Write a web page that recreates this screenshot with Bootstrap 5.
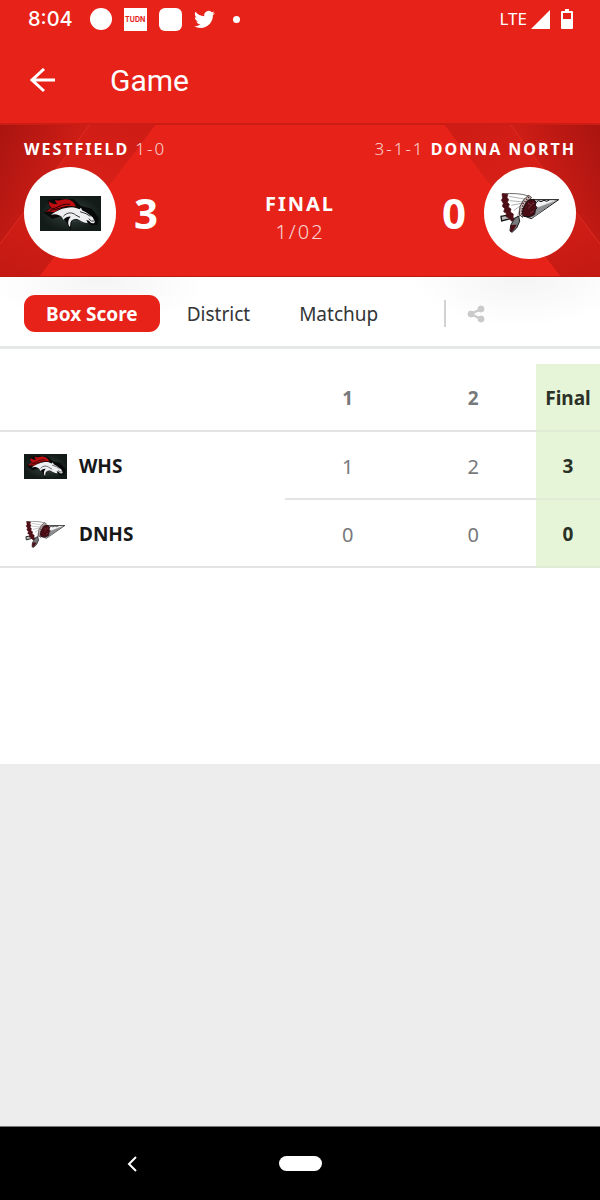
<!DOCTYPE html>
<html lang="en">
<head>
<meta charset="utf-8">
<meta name="viewport" content="width=device-width, initial-scale=1">
<title>Game</title>
<link rel="stylesheet" href="https://cdn.jsdelivr.net/npm/bootstrap@5.3.0/dist/css/bootstrap.min.css">
<style>
  :root { --brand: #e62219; --rule: #e3e5e5; }
  body { font-family: "Noto Sans", sans-serif; background: #ededed; color: #2d2f31; }
  .brand-bg { background: var(--brand); color: #fff; }
  .status { height: 38px; padding: 0 27px 0 28px; line-height: 24px; }
  .clock { font: 500 20px/24px "Inter", sans-serif; margin-right: 9px; }
  .net { font-size: 17px; font-weight: 400; }
  .tile { width: 23px; height: 23px; background: #fff; }
  .round-tile { width: 22px; height: 22px; }
  .tudn { color: var(--brand); font: 700 7px/23px "Inter", sans-serif; text-align: center; }
  .dot { width: 7px; height: 7px; background: #fff; border-radius: 50%; margin-left: 10px; }
  .app-bar { height: 85px; padding: 0 28px; }
  .app-title { font: 400 30px/40px Roboto, sans-serif; margin: 0 0 0 52px; }
  .scoreboard { height: 154px; border-top: 2px solid #cb1d14; border-bottom: 1px solid #b91a12; overflow: hidden; }
  .shard { width: 160px; height: 154px; top: -2px; }
  .shard-left { left: 0; }
  .shard-right { right: 0; transform: scaleX(-1); }
  .score-body { padding: 12px 24px 0; }
  .team-line { font-size: 16px; line-height: 24px; letter-spacing: 2px; margin-bottom: 6px; }
  .team-line .soft { font-size: 17px; }
  .soft { font-weight: 300; opacity: .8; }
  .crest { width: 92px; height: 92px; border-radius: 50%; background: #fff; }
  .side { gap: 18px; }
  .points { font-size: 42px; line-height: 48px; font-weight: 700; }
  .state { font-size: 20px; line-height: 28px; letter-spacing: 2px; padding-top: 10px; }
  .tabs { padding: 18px 24px 14px; border-bottom: 3px solid #e6e7e7;
    background: radial-gradient(110px 50px at 100px 0, #f4f4f4, transparent), radial-gradient(110px 50px at calc(100% - 80px) 0, #f4f4f4, transparent), #fff; }
  .tab-btn { font-size: 19px; line-height: 27px; padding: 6px 22px 4px; border: 0; border-radius: 11px; color: #333537; background: none; margin-right: 5px; }
  .tab-btn.on { background: var(--brand); color: #fff; font-weight: 700; }
  .divide { width: 2px; height: 27px; background: #d2d2d2; margin-left: 39px; }
  .share-btn { border: 0; background: none; padding: 0; margin-left: 21px; line-height: 0; }
  .sheet { background: #fff; padding: 15px 0 196px; }
  .box { table-layout: fixed; width: 100%; font-size: 19px; line-height: 27px; border-collapse: separate; border-spacing: 0; }
  .box th, .box td { height: 68px; padding: 2px 0 0; text-align: center; vertical-align: middle; border-bottom: 2px solid var(--rule); }
  .box thead th { color: #77797b; }
  .box td { color: #77797b; }
  .box td:not(.total) { font-size: 20px; }
  .box .who { text-align: left; padding-left: 24px; color: #17181a; }
  .box .open-row .who { border-bottom-color: transparent; }
  .box thead .total, .box .total { background: #e6f5d7; color: #2b3126; font-weight: 700; border-bottom-color: #e0ebd8; }
  .c-name { width: 47.5%; } .c-total { width: 64px; }
  .sys-nav { height: 74px; background: #000; border-top: 1px solid #777; padding: 0 123px; }
  .sys-nav button { border: 0; padding: 0; line-height: 0; }
  .back-btn { background: none; }
  .home-pill { width: 43px; height: 15px; border-radius: 8px; background: #fff; }
</style>
</head>
<body class="d-flex flex-column min-vh-100">

<svg width="0" height="0" class="position-absolute" aria-hidden="true">
  <radialGradient id="plate"><stop offset="0" stop-color="#35433e"/><stop offset="1" stop-color="#131b19"/></radialGradient>
  <symbol id="bronco" viewBox="0 0 183 105" preserveAspectRatio="none">
    <path fill="url(#plate)" d="M0 0h183v105H0z"/>
    <path fill="#070909" d="M11 50l20-14-8-23 30-5 48 2 22 20 32 8 22 28-5 20-19 2-13-12-20-2-24-8-4 36-15-26-12-16-28 8z"/>
    <path fill="#bd0d10" d="M15 49c9-3 13-12 20-14-8-4-9-12-7-19 6 8 16 9 24 7-5-4-7-8-6-12 11 6 19-1 32-1 14 0 25 9 30 22-25-7-47 5-66 17-11-3-16-3-27 0z"/>
    <path fill="none" stroke="#240607" stroke-width="3" d="M34 38c18 1 28-17 56-13M30 43c22-1 37-13 61-11"/>
    <path fill="#eeeff0" d="M32 57c18-12 39-23 64-23 9 0 15 3 22 6l5-5 3 8 12 6 20 15 7 13-3 5-9-1-6-7-8-2 4 9c-13 1-20-7-32-12-12-1-20 5-20 15l-1 9c-8-8-7-21 2-31-8-1-15 3-22 9l-4-8c-12-9-21-10-34-6z"/>
    <path fill="none" stroke="#333a3b" stroke-width="3" d="M70 61c12-14 28-12 37-4l13 7M120 47l18 6 13 8M146 68l8 7h10M98 76c12 0 19 0 28 4"/>
  </symbol>
  <symbol id="arrow-crest" viewBox="0 0 180 120">
    <path fill="#bcbec0" stroke="#141414" stroke-width="4" d="M3 70l26-5 5 11-29 8z"/>
    <path fill="#bcbec0" stroke="#141414" stroke-width="3" d="M82 20l94 0-82 57-22-8z"/>
    <path fill="#f2f2f2" d="M105 24l60-2-56 22z"/>
    <path fill="#8b8d90" d="M94 71l18-27 51-18-64 48z"/>
    <path fill="none" stroke="#141414" stroke-width="3" d="M104 25l5 3 6-5 8 3 9-4 8 3 8-4"/>
    <path fill="#fff" stroke="#222" stroke-width="2" d="M8 2c29-1 55-1 78 7l-2 12-19 19-7 30-25 9C24 66 11 31 8 2z"/>
    <path fill="#4e0e16" stroke="#4e0e16" stroke-width="2" d="M6 2l18 2-3 9 5 7-4 8 6 6-3 8 8 6-2 9 9 6-1 11 8 5-12 6-9-11-8-3 1-10-8-5 3-9-7-7 3-9-6-9 4-7z"/>
    <path fill="none" stroke="#888" stroke-width="2" d="M27 10l51 9M29 23l42 4M34 37l30-6M42 52l21-15M53 68l7-22"/>
    <path fill="#c9c0bf" stroke="#45383a" stroke-width="3" d="M86 7l9 7-17 14-9 22-1 23-10-8 2-24 11-21z"/>
    <path fill="none" stroke="#501820" stroke-width="4" stroke-dasharray="4 4" d="M87 12L69 32l-5 35"/>
    <path fill="#4b0d15" stroke="#180b0e" stroke-width="3" d="M84 22l17-3 7 9-2 9 5 7-5 7-2 13-13 7-20-1-4-12 6-20z"/>
    <path fill="none" stroke="#8b4b50" stroke-width="2" d="M84 31l10 6-9 8M95 33l7-2M91 60l10-6"/>
    <path fill="#77797c" stroke="#19191a" stroke-width="3" d="M44 76l12-7 3 16-9 20-14 13-6-4 2-17z"/>
    <path fill="#4e0e16" d="M33 96l17-1-8 14-8 8-3-5z"/>
  </symbol>
  <symbol id="shards" viewBox="0 0 160 154">
    <linearGradient id="fade1" x1="0" y1="0" x2="1" y2=".6"><stop offset="0" stop-color="#a91410"/><stop offset="1" stop-color="#dd2118"/></linearGradient>
    <linearGradient id="fade2" x1=".7" y1="0" x2=".2" y2="1"><stop offset="0" stop-color="#cf1d15"/><stop offset=".45" stop-color="#d92018"/><stop offset="1" stop-color="#c51a13"/></linearGradient>
    <path fill="url(#fade2)" d="M91 0h66L39 154H0v-33z"/>
    <path fill="url(#fade1)" d="M0 0h91L0 121z"/>
    <path fill="none" stroke="#ee3a2c" d="M91 0L0 121" opacity=".5"/>
  </symbol>
</svg>

<header class="brand-bg">
  <div class="status d-flex align-items-center justify-content-between">
    <div class="d-flex align-items-center gap-2">
      <span class="clock">8:04</span>
      <span class="tile round-tile rounded-circle me-1"></span>
      <span class="tile tudn">TUDN</span>
      <span class="tile rounded-2 ms-1 me-1"></span>
      <svg width="21" height="21" viewBox="0 0 24 24" fill="#fff" role="img" aria-label="Twitter"><path d="M23.953 4.57a10 10 0 01-2.825.775 4.958 4.958 0 002.163-2.723c-.951.555-2.005.959-3.127 1.184a4.92 4.92 0 00-8.384 4.482C7.69 8.095 4.067 6.13 1.64 3.162a4.822 4.822 0 00-.666 2.475c0 1.71.87 3.213 2.188 4.096a4.904 4.904 0 01-2.228-.616v.06a4.923 4.923 0 003.946 4.827 4.996 4.996 0 01-2.212.085 4.936 4.936 0 004.604 3.417 9.867 9.867 0 01-6.102 2.105c-.39 0-.779-.023-1.17-.067a13.995 13.995 0 007.557 2.209c9.053 0 13.998-7.496 13.998-13.985 0-.21 0-.42-.015-.63A9.935 9.935 0 0024 4.59z"/></svg>
      <span class="dot"></span>
    </div>
    <div class="d-flex align-items-center">
      <span class="net me-1">LTE</span>
      <svg width="19" height="19" viewBox="0 0 19 19" fill="#fff" aria-hidden="true"><path d="M19 0v19H0z"/></svg>
      <svg class="ms-2" width="15" height="20" viewBox="0 0 15 20" aria-hidden="true"><path fill="#fff" fill-rule="evenodd" d="M7 0h4v2h3q1 0 1 1v16q0 1-1 1H4q-1 0-1-1V3q0-1 1-1h3zM5 4v6h8V4z"/></svg>
    </div>
  </div>
  <div class="app-bar d-flex align-items-center">
    <a href="#" aria-label="Back" class="d-flex"><svg width="30" height="26" viewBox="0 0 30 26" fill="none" stroke="#fff" stroke-width="3"><path d="M27 12H5M16 1L4 12l12 11"/></svg></a>
    <h1 class="app-title">Game</h1>
  </div>
</header>

<section class="scoreboard brand-bg position-relative">
  <svg class="shard shard-left position-absolute" aria-hidden="true"><use href="#shards"/></svg>
  <svg class="shard shard-right position-absolute" aria-hidden="true"><use href="#shards"/></svg>
  <div class="score-body position-relative">
    <div class="team-line d-flex justify-content-between">
      <div><b>WESTFIELD</b> <span class="soft">1-0</span></div>
      <div><span class="soft">3-1-1</span> <b>DONNA NORTH</b></div>
    </div>
    <div class="d-flex align-items-center justify-content-between">
      <div class="side d-flex align-items-center">
        <div class="crest d-flex align-items-center justify-content-center"><svg width="61" height="35" role="img" aria-label="Westfield"><use href="#bronco"/></svg></div>
        <div class="points">3</div>
      </div>
      <div class="state text-center"><b>FINAL</b><br><span class="soft">1/02</span></div>
      <div class="side d-flex align-items-center">
        <div class="points">0</div>
        <div class="crest d-flex align-items-center justify-content-center"><svg width="60" height="40" role="img" aria-label="Donna North"><use href="#arrow-crest"/></svg></div>
      </div>
    </div>
  </div>
</section>

<nav class="tabs d-flex align-items-center">
  <button type="button" class="tab-btn on">Box Score</button>
  <button type="button" class="tab-btn">District</button>
  <button type="button" class="tab-btn">Matchup</button>
  <span class="divide"></span>
  <button type="button" class="share-btn" aria-label="Share"><svg width="18" height="18" viewBox="0 0 18 18" fill="#cacaca" stroke="#cacaca"><path fill="none" stroke-width="2.5" d="M14 4L4 9l10 5"/><circle cx="14" cy="4" r="3"/><circle cx="4" cy="9" r="3"/><circle cx="14" cy="14" r="3"/></svg></button>
</nav>

<main class="sheet">
  <table class="box">
    <colgroup><col class="c-name"><col><col><col class="c-total"></colgroup>
    <thead>
      <tr><th></th><th scope="col">1</th><th scope="col">2</th><th scope="col" class="total">Final</th></tr>
    </thead>
    <tbody>
      <tr class="open-row">
        <th scope="row" class="who"><div class="d-flex align-items-center"><svg class="me-2" width="43" height="25" aria-hidden="true"><use href="#bronco"/></svg><span class="ms-1">WHS</span></div></th>
        <td>1</td><td>2</td><td class="total">3</td>
      </tr>
      <tr>
        <th scope="row" class="who"><div class="d-flex align-items-center"><svg class="me-2" width="43" height="27" aria-hidden="true"><use href="#arrow-crest"/></svg><span class="ms-1">DNHS</span></div></th>
        <td>0</td><td>0</td><td class="total">0</td>
      </tr>
    </tbody>
  </table>
</main>

<footer class="sys-nav d-flex align-items-center mt-auto">
  <div class="col d-flex"><button type="button" class="back-btn" aria-label="Back"><svg width="16" height="18" viewBox="0 0 16 18" fill="none" stroke="#fff" stroke-width="2"><path d="M13 2L6 9l7 7"/></svg></button></div>
  <button type="button" class="home-pill" aria-label="Home"></button>
  <div class="col"></div>
</footer>

<script src="https://cdn.jsdelivr.net/npm/bootstrap@5.3.0/dist/js/bootstrap.bundle.min.js"></script>
</body>
</html>
